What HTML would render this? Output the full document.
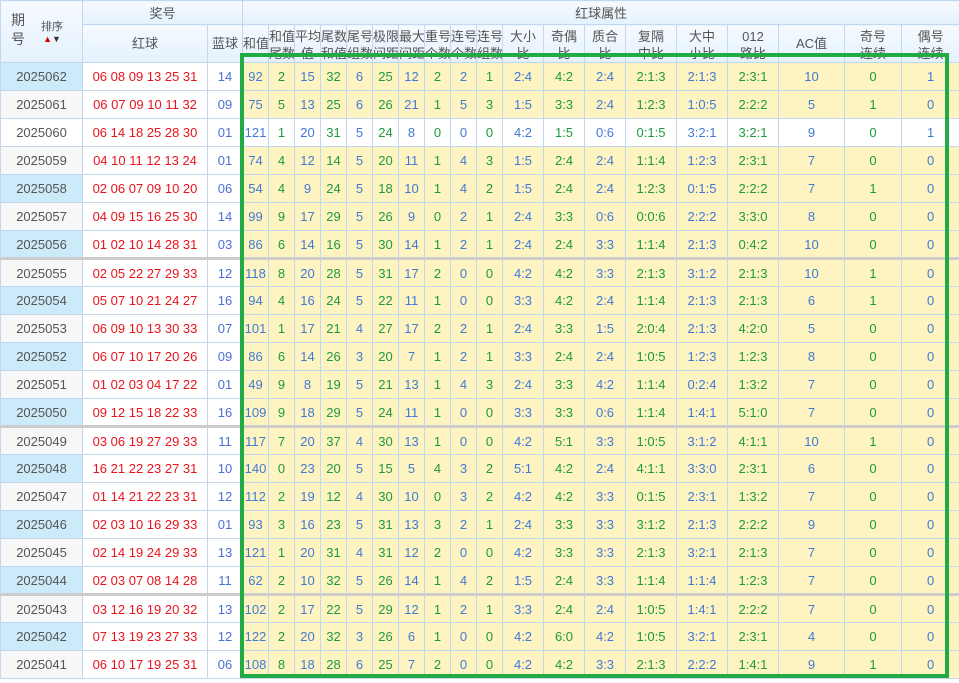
<!DOCTYPE html>
<html><head><meta charset="utf-8"><style>
*{margin:0;padding:0;box-sizing:border-box}
body{width:959px;height:683px;overflow:hidden;background:#fff;font-family:"Liberation Sans","Noto Sans CJK SC",sans-serif;position:relative}
table{border-collapse:collapse;table-layout:fixed;width:959px;font-size:13px}
td,th{border:1px solid #c3d8ee;text-align:center;font-weight:normal;white-space:nowrap;overflow:hidden}
th{color:#555;background:linear-gradient(#f5faff,#e4f1fc);font-size:13px}
.h1 th{height:24px}
.h2 th{height:37px;vertical-align:top;padding-top:3px;line-height:17px}
.h2 th.c{vertical-align:middle;padding-top:0}
tbody td{height:28px;background:#fdf4c2}
tbody td:nth-child(even){color:#4279d6}
tbody td:nth-child(odd){color:#1e9a3c}
tbody td:nth-child(1){color:#555;background:#f7f7f7}
tbody tr.b td:nth-child(1){background:#cdeafb}
tbody td:nth-child(2){color:#e8141c;background:#fff}
tbody td:nth-child(3){color:#4a6fd6;background:#fff}
tbody tr.w td{background:#fff}
tbody tr.s td{border-top:3px solid #cccccc}
#box{position:absolute;left:240px;top:53px;width:709px;height:625px;border:4px solid #22aa44}
</style></head><body>
<table>
<colgroup><col style="width:82px"><col style="width:125px"><col style="width:35px"><col style="width:26px"><col style="width:26px"><col style="width:26px"><col style="width:26px"><col style="width:26px"><col style="width:26px"><col style="width:26px"><col style="width:26px"><col style="width:26px"><col style="width:26px"><col style="width:41px"><col style="width:41px"><col style="width:41px"><col style="width:51px"><col style="width:51px"><col style="width:51px"><col style="width:66px"><col style="width:57px"><col style="width:58px"></colgroup>
<thead>
<tr class="h1"><th rowspan="2" style="position:relative"><span style="position:absolute;left:10px;top:10px;line-height:19px;font-size:14px">期<br>号</span><span style="position:absolute;left:40px;top:20px;font-size:11px;line-height:12px">排序<br><b style="color:#c00;font-size:9px">▲</b><b style="color:#333;font-size:9px">▼</b></span></th><th colspan="2">奖号</th><th colspan="19">红球属性</th></tr>
<tr class="h2"><th class="c">红球</th><th class="c">蓝球</th><th class="c">和值</th><th>和值<br>尾数</th><th>平均<br>值</th><th>尾数<br>和值</th><th>尾号<br>组数</th><th>极限<br>间距</th><th>最大<br>间距</th><th>重号<br>个数</th><th>连号<br>个数</th><th>连号<br>组数</th><th>大小<br>比</th><th>奇偶<br>比</th><th>质合<br>比</th><th>复隔<br>中比</th><th>大中<br>小比</th><th>012<br>路比</th><th class="c">AC值</th><th>奇号<br>连续</th><th>偶号<br>连续</th></tr>
</thead>
<tbody>
<tr class="b"><td>2025062</td><td>06 08 09 13 25 31</td><td>14</td><td>92</td><td>2</td><td>15</td><td>32</td><td>6</td><td>25</td><td>12</td><td>2</td><td>2</td><td>1</td><td>2:4</td><td>4:2</td><td>2:4</td><td>2:1:3</td><td>2:1:3</td><td>2:3:1</td><td>10</td><td>0</td><td>1</td></tr>
<tr><td>2025061</td><td>06 07 09 10 11 32</td><td>09</td><td>75</td><td>5</td><td>13</td><td>25</td><td>6</td><td>26</td><td>21</td><td>1</td><td>5</td><td>3</td><td>1:5</td><td>3:3</td><td>2:4</td><td>1:2:3</td><td>1:0:5</td><td>2:2:2</td><td>5</td><td>1</td><td>0</td></tr>
<tr class="w"><td>2025060</td><td>06 14 18 25 28 30</td><td>01</td><td>121</td><td>1</td><td>20</td><td>31</td><td>5</td><td>24</td><td>8</td><td>0</td><td>0</td><td>0</td><td>4:2</td><td>1:5</td><td>0:6</td><td>0:1:5</td><td>3:2:1</td><td>3:2:1</td><td>9</td><td>0</td><td>1</td></tr>
<tr><td>2025059</td><td>04 10 11 12 13 24</td><td>01</td><td>74</td><td>4</td><td>12</td><td>14</td><td>5</td><td>20</td><td>11</td><td>1</td><td>4</td><td>3</td><td>1:5</td><td>2:4</td><td>2:4</td><td>1:1:4</td><td>1:2:3</td><td>2:3:1</td><td>7</td><td>0</td><td>0</td></tr>
<tr class="b"><td>2025058</td><td>02 06 07 09 10 20</td><td>06</td><td>54</td><td>4</td><td>9</td><td>24</td><td>5</td><td>18</td><td>10</td><td>1</td><td>4</td><td>2</td><td>1:5</td><td>2:4</td><td>2:4</td><td>1:2:3</td><td>0:1:5</td><td>2:2:2</td><td>7</td><td>1</td><td>0</td></tr>
<tr><td>2025057</td><td>04 09 15 16 25 30</td><td>14</td><td>99</td><td>9</td><td>17</td><td>29</td><td>5</td><td>26</td><td>9</td><td>0</td><td>2</td><td>1</td><td>2:4</td><td>3:3</td><td>0:6</td><td>0:0:6</td><td>2:2:2</td><td>3:3:0</td><td>8</td><td>0</td><td>0</td></tr>
<tr class="b"><td>2025056</td><td>01 02 10 14 28 31</td><td>03</td><td>86</td><td>6</td><td>14</td><td>16</td><td>5</td><td>30</td><td>14</td><td>1</td><td>2</td><td>1</td><td>2:4</td><td>2:4</td><td>3:3</td><td>1:1:4</td><td>2:1:3</td><td>0:4:2</td><td>10</td><td>0</td><td>0</td></tr>
<tr class="s"><td>2025055</td><td>02 05 22 27 29 33</td><td>12</td><td>118</td><td>8</td><td>20</td><td>28</td><td>5</td><td>31</td><td>17</td><td>2</td><td>0</td><td>0</td><td>4:2</td><td>4:2</td><td>3:3</td><td>2:1:3</td><td>3:1:2</td><td>2:1:3</td><td>10</td><td>1</td><td>0</td></tr>
<tr class="b"><td>2025054</td><td>05 07 10 21 24 27</td><td>16</td><td>94</td><td>4</td><td>16</td><td>24</td><td>5</td><td>22</td><td>11</td><td>1</td><td>0</td><td>0</td><td>3:3</td><td>4:2</td><td>2:4</td><td>1:1:4</td><td>2:1:3</td><td>2:1:3</td><td>6</td><td>1</td><td>0</td></tr>
<tr><td>2025053</td><td>06 09 10 13 30 33</td><td>07</td><td>101</td><td>1</td><td>17</td><td>21</td><td>4</td><td>27</td><td>17</td><td>2</td><td>2</td><td>1</td><td>2:4</td><td>3:3</td><td>1:5</td><td>2:0:4</td><td>2:1:3</td><td>4:2:0</td><td>5</td><td>0</td><td>0</td></tr>
<tr class="b"><td>2025052</td><td>06 07 10 17 20 26</td><td>09</td><td>86</td><td>6</td><td>14</td><td>26</td><td>3</td><td>20</td><td>7</td><td>1</td><td>2</td><td>1</td><td>3:3</td><td>2:4</td><td>2:4</td><td>1:0:5</td><td>1:2:3</td><td>1:2:3</td><td>8</td><td>0</td><td>0</td></tr>
<tr><td>2025051</td><td>01 02 03 04 17 22</td><td>01</td><td>49</td><td>9</td><td>8</td><td>19</td><td>5</td><td>21</td><td>13</td><td>1</td><td>4</td><td>3</td><td>2:4</td><td>3:3</td><td>4:2</td><td>1:1:4</td><td>0:2:4</td><td>1:3:2</td><td>7</td><td>0</td><td>0</td></tr>
<tr class="b"><td>2025050</td><td>09 12 15 18 22 33</td><td>16</td><td>109</td><td>9</td><td>18</td><td>29</td><td>5</td><td>24</td><td>11</td><td>1</td><td>0</td><td>0</td><td>3:3</td><td>3:3</td><td>0:6</td><td>1:1:4</td><td>1:4:1</td><td>5:1:0</td><td>7</td><td>0</td><td>0</td></tr>
<tr class="s"><td>2025049</td><td>03 06 19 27 29 33</td><td>11</td><td>117</td><td>7</td><td>20</td><td>37</td><td>4</td><td>30</td><td>13</td><td>1</td><td>0</td><td>0</td><td>4:2</td><td>5:1</td><td>3:3</td><td>1:0:5</td><td>3:1:2</td><td>4:1:1</td><td>10</td><td>1</td><td>0</td></tr>
<tr class="b"><td>2025048</td><td>16 21 22 23 27 31</td><td>10</td><td>140</td><td>0</td><td>23</td><td>20</td><td>5</td><td>15</td><td>5</td><td>4</td><td>3</td><td>2</td><td>5:1</td><td>4:2</td><td>2:4</td><td>4:1:1</td><td>3:3:0</td><td>2:3:1</td><td>6</td><td>0</td><td>0</td></tr>
<tr><td>2025047</td><td>01 14 21 22 23 31</td><td>12</td><td>112</td><td>2</td><td>19</td><td>12</td><td>4</td><td>30</td><td>10</td><td>0</td><td>3</td><td>2</td><td>4:2</td><td>4:2</td><td>3:3</td><td>0:1:5</td><td>2:3:1</td><td>1:3:2</td><td>7</td><td>0</td><td>0</td></tr>
<tr class="b"><td>2025046</td><td>02 03 10 16 29 33</td><td>01</td><td>93</td><td>3</td><td>16</td><td>23</td><td>5</td><td>31</td><td>13</td><td>3</td><td>2</td><td>1</td><td>2:4</td><td>3:3</td><td>3:3</td><td>3:1:2</td><td>2:1:3</td><td>2:2:2</td><td>9</td><td>0</td><td>0</td></tr>
<tr><td>2025045</td><td>02 14 19 24 29 33</td><td>13</td><td>121</td><td>1</td><td>20</td><td>31</td><td>4</td><td>31</td><td>12</td><td>2</td><td>0</td><td>0</td><td>4:2</td><td>3:3</td><td>3:3</td><td>2:1:3</td><td>3:2:1</td><td>2:1:3</td><td>7</td><td>0</td><td>0</td></tr>
<tr class="b"><td>2025044</td><td>02 03 07 08 14 28</td><td>11</td><td>62</td><td>2</td><td>10</td><td>32</td><td>5</td><td>26</td><td>14</td><td>1</td><td>4</td><td>2</td><td>1:5</td><td>2:4</td><td>3:3</td><td>1:1:4</td><td>1:1:4</td><td>1:2:3</td><td>7</td><td>0</td><td>0</td></tr>
<tr class="s"><td>2025043</td><td>03 12 16 19 20 32</td><td>13</td><td>102</td><td>2</td><td>17</td><td>22</td><td>5</td><td>29</td><td>12</td><td>1</td><td>2</td><td>1</td><td>3:3</td><td>2:4</td><td>2:4</td><td>1:0:5</td><td>1:4:1</td><td>2:2:2</td><td>7</td><td>0</td><td>0</td></tr>
<tr class="b"><td>2025042</td><td>07 13 19 23 27 33</td><td>12</td><td>122</td><td>2</td><td>20</td><td>32</td><td>3</td><td>26</td><td>6</td><td>1</td><td>0</td><td>0</td><td>4:2</td><td>6:0</td><td>4:2</td><td>1:0:5</td><td>3:2:1</td><td>2:3:1</td><td>4</td><td>0</td><td>0</td></tr>
<tr><td>2025041</td><td>06 10 17 19 25 31</td><td>06</td><td>108</td><td>8</td><td>18</td><td>28</td><td>6</td><td>25</td><td>7</td><td>2</td><td>0</td><td>0</td><td>4:2</td><td>4:2</td><td>3:3</td><td>2:1:3</td><td>2:2:2</td><td>1:4:1</td><td>9</td><td>1</td><td>0</td></tr>
</tbody></table>
<div id="box"></div>
</body></html>
